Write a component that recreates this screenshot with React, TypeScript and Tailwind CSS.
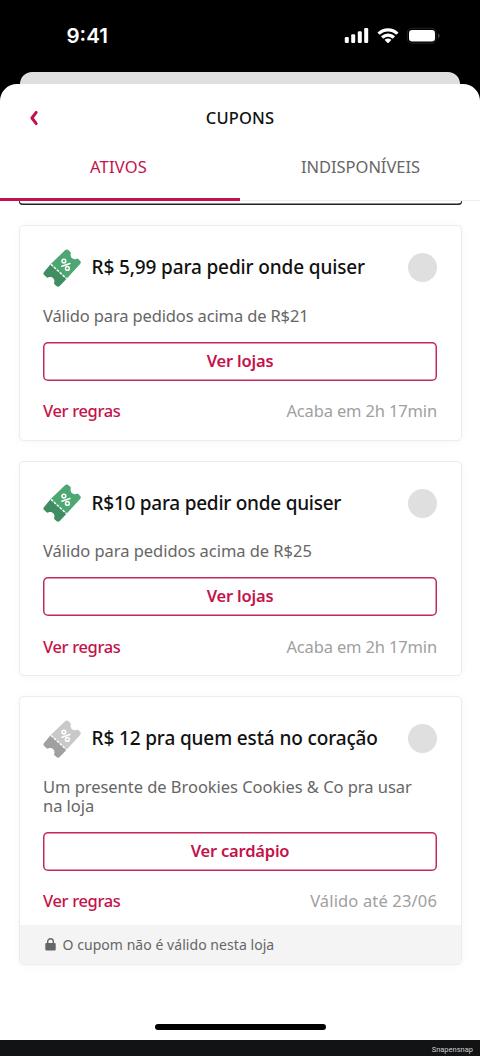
import React from 'react'
import clsx from 'clsx'

type Coupon = {
    title: string
    titleClass: string
    description: React.ReactNode
    descriptionClass: string
    action: string
    expires: string
    expiresClass: string
    disabled?: boolean
    notice?: string
}

const coupons: Coupon[] = [
    {
        title: 'R$ 5,99 para pedir onde quiser',
        titleClass: 'tracking-[-0.13px]',
        description: 'Válido para pedidos acima de R$21',
        descriptionClass: 'tracking-[-0.14px]',
        action: 'Ver lojas',
        expires: 'Acaba em 2h 17min',
        expiresClass: 'tracking-[-0.15px]',
    },
    {
        title: 'R$10 para pedir onde quiser',
        titleClass: 'tracking-[-0.25px]',
        description: 'Válido para pedidos acima de R$25',
        descriptionClass: 'tracking-[-0.04px]',
        action: 'Ver lojas',
        expires: 'Acaba em 2h 17min',
        expiresClass: 'tracking-[-0.15px]',
    },
    {
        title: 'R$ 12 pra quem está no coração',
        titleClass: 'tracking-[-0.13px]',
        description: (
            <>
                Um presente de Brookies Cookies & Co pra usar
                <br />
                na loja
            </>
        ),
        descriptionClass: 'tracking-[-0.04px]',
        action: 'Ver cardápio',
        expires: 'Válido até 23/06',
        expiresClass: 'tracking-[0.15px]',
        disabled: true,
        notice: 'O cupom não é válido nesta loja',
    },
]

const StatusIcons = () => (
    <svg width="96" height="18" viewBox="0 0 96 18" fill="#fff">
        <rect x="0.8" y="10" width="4" height="6" rx="1.2" />
        <rect x="7.2" y="7.2" width="4" height="8.8" rx="1.2" />
        <rect x="13.8" y="4.2" width="4" height="11.8" rx="1.2" />
        <rect x="20.2" y="1" width="4" height="15" rx="1.2" />
        <path d="M44 1.2c4 0 7.500 1.500 10.200 4.100.2.200.2.500 0 .7l-1.600 1.600c-.2.200-.5.200-.7 0a11.300 11.300 0 0 0-15.800 0c-.2.200-.5.200-.7 0L33.800 6c-.2-.2-.2-.5 0-.7A14.700 14.700 0 0 1 44 1.200Z" />
        <path d="M44 6.400c2.600 0 4.900 1 6.700 2.600.2.200.2.500 0 .7l-1.700 1.700c-.2.200-.5.200-.7 0a6.300 6.300 0 0 0-8.600 0c-.2.200-.5.200-.7 0l-1.700-1.700c-.2-.2-.2-.5 0-.7A9.800 9.800 0 0 1 44 6.400Z" />
        <path d="M44 11.400c1.200 0 2.300.4 3.100 1.100.2.200.2.500 0 .7l-2.700 2.700c-.2.200-.6.200-.8 0l-2.700-2.700c-.2-.2-.2-.5 0-.7.800-.7 1.900-1.100 3.100-1.100Z" />
        <rect x="63.300" y="1.300" width="28.900" height="14.900" rx="4.500" fill="none" stroke="#252525" />
        <rect x="65" y="3" width="26" height="11.500" rx="3.200" />
        <path d="M94 6.300v5c1-.4 1.600-1.400 1.600-2.500S95 6.700 94 6.300Z" fill="#444" />
    </svg>
)

const TicketIcon = ({ disabled }: { disabled?: boolean }) => (
    <svg width="38" height="38" viewBox="0 0 38 38" className="shrink-0">
        <path
            d="M22 1.300Q24-.2 25.600 1.300L27.300 2.900Q28.200 3.800 27.600 5C27.100 8.500 29.900 11 33.200 10L34.700 9.600 37 11.700Q38.600 13.200 37.100 14.900L23.600 29.700 7.700 15.100Z"
            fill={disabled ? '#c9c9c9' : '#4ca772'}
        />
        <path
            d="M7.700 15.100 23.600 29.700 16.700 37Q15.100 38.600 13.400 37L11 34.800 11.300 33.300C12.200 29.800 9.100 27.100 5.800 28.200L4.200 28.700 1.100 26Q-.3 24.600 1.100 23Z"
            fill={disabled ? '#a0a0a0' : '#3f8d60'}
        />
        <path d="M7.900 15.300 23.500 29.600" fill="none" stroke="#fff" strokeWidth="1.500" strokeDasharray="2.700 1.300" />
        <g fill="none" stroke="#fff" strokeWidth="1.500" strokeLinecap="round">
            <path d="m18.900 17.300 8.100-2.800" />
            <circle cx="20.900" cy="12.100" r="1.900" />
            <circle cx="24.400" cy="19.400" r="1.900" />
        </g>
    </svg>
)

const LockIcon = () => (
    <svg width="11" height="13" viewBox="0 0 11 13" className="shrink-0">
        <path d="M2.700 6V3.500a2.800 2.800 0 0 1 5.600 0V6" fill="none" stroke="#666" strokeWidth="1.400" />
        <rect x="0.300" y="5" width="10.400" height="7.600" rx="1" fill="#666" />
    </svg>
)

const CouponCard = (props: Coupon) => {
    const { title, titleClass, description, descriptionClass, action, expires, expiresClass, disabled, notice } = props

    return (
        <div className="overflow-hidden rounded-[5px] border border-[#ececec] bg-white shadow-[0_1px_8px_rgba(0,0,0,0.04)]">
            <div className={clsx('px-[23.500px] pt-[21.500px]', notice ? 'pb-[11px]' : 'pb-[16px]')}>
                <div className="flex h-[40px] items-center">
                    <TicketIcon disabled={disabled} />
                    <h2 className={clsx('ml-[10.500px] flex-1 whitespace-nowrap text-[19px] font-medium text-[#111]', titleClass)}>
                        {title}
                    </h2>
                    <span className="size-[29px] shrink-0 rounded-full bg-[#dfdfdf]" />
                </div>
                <p className={clsx('mt-[18px] whitespace-nowrap text-[16.500px] leading-[19px] text-[#666]', descriptionClass)}>
                    {description}
                </p>
                <button className="mt-[17px] flex h-[39px] w-full items-center justify-center rounded-[5px] text-[16.500px] font-semibold tracking-[-0.2px] text-[#c4124a] shadow-[inset_0_0_0_1.500px_#c4295a]">
                    {action}
                </button>
                <div className="mt-[19px] flex h-[24px] items-center justify-between whitespace-nowrap text-[16.500px]">
                    <span className="font-medium tracking-[-0.35px] text-[#c4124a]">Ver regras</span>
                    <span className={clsx('text-[#a0a0a0]', expiresClass)}>{expires}</span>
                </div>
            </div>
            {notice && (
                <div className="flex h-[39px] items-center gap-[7px] bg-[#f4f4f4] pl-[25px] text-[14px] tracking-[0.05px] text-[#666]">
                    <LockIcon />
                    <span>{notice}</span>
                </div>
            )}
        </div>
    )
}

const App = () => {
    return (
        <div className="flex h-[1056px] w-[480px] flex-col overflow-hidden bg-black font-['Noto_Sans',sans-serif]">
            <div className="flex h-[72px] shrink-0 items-center justify-between pl-[66.500px] pr-[40px]">
                <span className="font-[Inter,sans-serif] text-[20.500px] font-semibold text-white">9:41</span>
                <StatusIcons />
            </div>
            <div className="mx-[20px] h-[12px] shrink-0 rounded-t-[12px] bg-[#dfdfdf]" />
            <div className="flex h-[955.500px] shrink-0 flex-col overflow-hidden rounded-t-[17px] bg-white">
                <header className="grid h-[68px] shrink-0 grid-cols-[60px_1fr_60px] items-center">
                    <svg width="10" height="16" viewBox="0 0 10 16" className="ml-[29px]">
                        <path d="M7.200 2.400 2.900 8l4.300 5.600" fill="none" stroke="#c4124a" strokeWidth="3" strokeLinejoin="round" strokeLinecap="round" />
                    </svg>
                    <h1 className="text-center text-[16.500px] font-medium tracking-[0.15px] text-[#111]">CUPONS</h1>
                </header>
                <nav className="grid h-[49px] shrink-0 grid-cols-2 border-b border-[#eee] text-[16.500px]">
                    <div className="-mb-px flex justify-center border-b-[3px] border-[#c4124a] pr-[3px] pt-[3px] text-[#c4124a]">
                        <span className="tracking-[0.2px]">ATIVOS</span>
                    </div>
                    <div className="flex justify-center pl-[1px] pt-[3px] tracking-[-0.05px] text-[#666]">INDISPONÍVEIS</div>
                </nav>
                <main className="flex flex-1 flex-col px-[18.500px]">
                    <div className="h-[4px] shrink-0 rounded-b-[5px] shadow-[inset_0_-1.500px_0_#222,inset_1px_0_0_#555,inset_-1px_0_0_#555]" />
                    <div className="mt-[20px] flex flex-col gap-[20px]">
                        {coupons.map((coupon) => (
                            <CouponCard key={coupon.title} {...coupon} />
                        ))}
                    </div>
                </main>
                <div className="mb-[10px] h-[6px] w-[171px] shrink-0 self-center rounded-full bg-black" />
            </div>
            <footer className="flex flex-1 items-center justify-end bg-[#121314] pr-[7px] pt-[3px] font-[Roboto,sans-serif] text-[7.500px] text-[#ccc]">
                Snapensnap
            </footer>
        </div>
    )
}

export default App
